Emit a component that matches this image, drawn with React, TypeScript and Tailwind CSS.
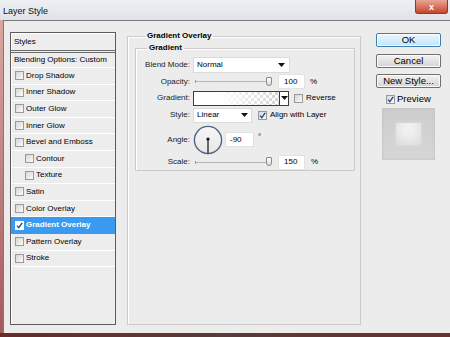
import React from "react";

const font = { fontFamily: '"Liberation Sans", Arial, sans-serif' };

const Check: React.FC<{ checked?: boolean; onBlue?: boolean }> = ({ checked, onBlue }) => {
  return (
    <span
      className={`flex h-[9px] w-[9px] shrink-0 items-center justify-center border ${
        onBlue ? "border-white bg-white" : "border-[#9a9a9a] bg-gradient-to-br from-[#d6d6d6] to-[#fbfbfb]"
      }`}
    >
      {checked && (
        <svg width="7" height="7" viewBox="0 0 7 7">
          <path d="M1 3.6 L2.8 5.6 L6.2 0.8" fill="none" stroke="#1f4f8f" strokeWidth="1.4" />
        </svg>
      )}
    </span>
  );
};

const Arrow = () => (
  <svg width="7" height="4" viewBox="0 0 7 4" className="shrink-0">
    <path d="M0 0 H7 L3.5 4 Z" fill="#111" />
  </svg>
);

const Slider: React.FC = () => (
  <div className="relative flex h-full w-[82px] items-center">
    <div className="ml-[2px] h-[3px] w-[1px] bg-[#9a9a9a]" />
    <div className="h-[1px] w-[72px] bg-[#b5b5b5]" />
    <div className="ml-[-2px] mb-[1px] h-[9px] w-[6px] rounded-b-[3px] rounded-t-[1px] border border-[#8a8a8a] bg-gradient-to-b from-white to-[#dcdcdc]" />
  </div>
);

const Field: React.FC<{ value: string }> = ({ value }) => (
  <div className="ml-[3px] flex h-[15px] w-[27px] items-center border border-[#e2e2e2] bg-white pl-[5px]">
    {value}
  </div>
);

const items = [
  { name: "Drop Shadow" },
  { name: "Inner Shadow" },
  { name: "Outer Glow" },
  { name: "Inner Glow" },
  { name: "Bevel and Emboss" },
  { name: "Contour", sub: true },
  { name: "Texture", sub: true },
  { name: "Satin" },
  { name: "Color Overlay" },
  { name: "Gradient Overlay", on: true },
  { name: "Pattern Overlay" },
  { name: "Stroke" },
];

const Row: React.FC<{ label: string; h: string; children: React.ReactNode }> = ({ label, h, children }) => (
  <div className={`flex items-center ${h}`}>
    <div className="w-[54px] text-right text-[#222]">{label}</div>
    <div className="ml-[3px] flex h-full items-center">{children}</div>
  </div>
);

export default function App() {
  return (
    <div
      className="flex h-[337px] w-[450px] flex-col overflow-hidden bg-[#6b2b2b] text-[8px] leading-[10px] text-black"
      style={font}
    >
      <div className="flex h-[20px] shrink-0 items-start bg-gradient-to-b from-[#eef0f3] to-[#dfe3e9]">
        <div className="pl-[3px] pt-[6px] text-[9px] leading-[10px] text-[#111]">Layer Style</div>
        <div className="ml-auto mr-[2px] flex h-[14px] w-[33px] items-center justify-center rounded-b-[3px] border border-t-0 border-[#8a3a2e] bg-gradient-to-b from-[#e9a494] to-[#c5432d] text-[9px] font-bold text-white">
          x
        </div>
      </div>
      <div className="flex flex-1">
        <div className="w-[3px] shrink-0 bg-gradient-to-b from-[#d9a7a3] to-[#a35c5c]" />
        <div className="flex flex-1 border-l border-t border-[#7a7a7a] bg-[#ececec] pl-[6px] pt-[10px]">
          {/* styles list */}
          <div className="mt-[1px] flex h-[293px] w-[106px] flex-col border border-[#5c5c5c] bg-[#ededed] shadow-[inset_1px_1px_0_#fff]">
            <div className="flex h-[18px] shrink-0 items-center border-b border-[#6c6c6c] pl-[3px]">Styles</div>
            <div className="mt-[1px] flex h-[16px] shrink-0 items-center border-b border-t border-b-white border-t-[#6c6c6c] pl-[3px]">
              Blending Options: Custom
            </div>
            {items.map((it) => (
              <div
                key={it.name}
                className={`flex h-[16.6px] shrink-0 items-center gap-[2px] border-b ${
                  it.on ? "border-[#3a9af0] bg-[#3a9af0] font-bold text-white" : "border-white"
                } ${it.sub ? "pl-[14px]" : "pl-[4px]"}`}
              >
                <Check checked={it.on} onBlue={it.on} />
                <span>{it.name}</span>
              </div>
            ))}
          </div>

          {/* gradient overlay group */}
          <fieldset className="ml-[11px] h-[294px] w-[234px] border border-[#cbcbcb] pl-[7px] pr-[5px] pt-[2px] shadow-[inset_1px_1px_0_#fff]">
            <legend className="ml-[10px] px-[2px] font-bold leading-[10px]">Gradient Overlay</legend>
            <fieldset className="h-[128px] border border-[#cbcbcb] pt-[3px] shadow-[inset_1px_1px_0_#fff]">
              <legend className="ml-[11px] px-[2px] font-bold leading-[10px]">Gradient</legend>
              <Row label="Blend Mode:" h="h-[17px]">
                <div className="flex h-[16px] w-[97px] items-center justify-between border border-[#dadada] bg-white pl-[3px] pr-[4px]">
                  <span>Normal</span>
                  <Arrow />
                </div>
              </Row>
              <Row label="Opacity:" h="h-[17px]">
                <Slider />
                <Field value="100" />
                <span className="ml-[5px]">%</span>
              </Row>
              <Row label="Gradient:" h="h-[16px]">
                <div className="flex h-[15px] w-[96px] border border-[#3c3c3c] bg-white">
                  <div className="h-full w-[85px] bg-[conic-gradient(#d4d4d4_25%,#fff_0_50%,#d4d4d4_0_75%,#fff_0)] bg-[length:6px_6px]">
                    <div className="h-full w-full bg-gradient-to-r from-white from-30% to-transparent" />
                  </div>
                  <div className="flex flex-1 items-center justify-center border-l border-[#3c3c3c]">
                    <Arrow />
                  </div>
                </div>
                <div className="ml-[5px] flex items-center gap-[3px]">
                  <Check />
                  <span>Reverse</span>
                </div>
              </Row>
              <Row label="Style:" h="h-[18px]">
                <div className="flex h-[15px] w-[59px] items-center justify-between border border-[#dadada] bg-white pl-[3px] pr-[3px]">
                  <span>Linear</span>
                  <Arrow />
                </div>
                <div className="ml-[6px] flex items-center gap-[3px]">
                  <Check checked />
                  <span>Align with Layer</span>
                </div>
              </Row>
              <Row label="Angle:" h="h-[31px]">
                <svg width="30" height="30" viewBox="0 0 30 30">
                  <defs>
                    <linearGradient id="dial" x1="0" y1="0" x2="0" y2="1">
                      <stop offset="0" stopColor="#f7f7f7" />
                      <stop offset="1" stopColor="#e6e6e6" />
                    </linearGradient>
                  </defs>
                  <circle cx="15" cy="15" r="13.6" fill="url(#dial)" stroke="#4a6482" strokeWidth="1.4" />
                  <line x1="15" y1="14" x2="15" y2="28.5" stroke="#111" strokeWidth="1.2" />
                  <circle cx="15" cy="14" r="1.6" fill="#111" />
                </svg>
                <div className="ml-[2px] flex h-[15px] w-[29px] items-center border border-[#e2e2e2] bg-white pl-[4px]">-90</div>
                <span className="ml-[4px] self-start pt-[8px]">°</span>
              </Row>
              <Row label="Scale:" h="h-[14px]">
                <Slider />
                <Field value="150" />
                <span className="ml-[6px]">%</span>
              </Row>
            </fieldset>
          </fieldset>

          {/* buttons */}
          <div className="ml-[15px] flex w-[65px] flex-col pt-[2px] text-[9.5px]">
            <div className="flex h-[14px] items-center justify-center rounded-[2px] border border-[#3c7fb1] bg-gradient-to-b from-[#eaf6fd] to-[#bee6fd] shadow-[inset_0_0_0_1px_#fff]">
              OK
            </div>
            <div className="mt-[7px] flex h-[14px] items-center justify-center rounded-[2px] border border-[#707070] bg-gradient-to-b from-[#f2f2f2] to-[#d4d4d4] shadow-[inset_0_0_0_1px_#fbfbfb]">
              Cancel
            </div>
            <div className="mt-[6px] flex h-[14px] items-center justify-center rounded-[2px] border border-[#707070] bg-gradient-to-b from-[#f2f2f2] to-[#d4d4d4] shadow-[inset_0_0_0_1px_#fbfbfb]">
              New Style...
            </div>
            <div className="ml-[10px] mt-[6px] flex h-[10px] items-center gap-[2px]">
              <Check checked />
              <span>Preview</span>
            </div>
            <div className="ml-[6px] mt-[4px] flex h-[52px] w-[53px] items-center justify-center bg-gradient-to-b from-[#cdcdcd] to-[#d6d6d6] shadow-[inset_0_0_3px_#bdbdbd]">
              <div className="h-[22px] w-[25px] bg-[radial-gradient(circle_at_50%_30%,#f0f0f0_25%,#dadada_100%)] shadow-[0_0_3px_#e0e0e0]" />
            </div>
          </div>
        </div>
      </div>
      <div className="h-[4px] shrink-0 bg-gradient-to-r from-[#6a2a2a] via-[#5a3a3a] to-[#6a3030]" />
    </div>
  );
}
